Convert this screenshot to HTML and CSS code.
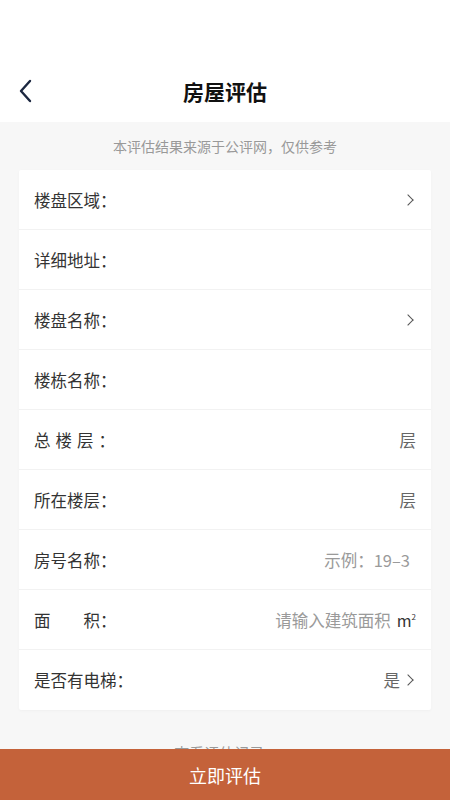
FILE: index.html
```html
<!DOCTYPE html>
<html lang="zh-CN">
<head>
  <meta charset="UTF-8" />
  <meta name="viewport" content="width=device-width, initial-scale=1.0"/>
  <title>房屋评估</title>
  <link rel="stylesheet" href="styles.css">
</head>
<body>

<header class="top">
  <div class="status"></div>
  <nav class="navbar">
    <a class="back" href="#">
      <svg width="14" height="24" viewBox="0 0 14 24"><path d="M12 2 L3 12 L12 22" fill="none" stroke="#1c2740" stroke-width="2.4" stroke-linecap="round" stroke-linejoin="round"/></svg>
    </a>
    <h1>房屋评估</h1>
  </nav>
</header>

<main class="page">
  <p class="tip">本评估结果来源于公评网，仅供参考</p>

  <section class="card">
    <div class="row">
      <span class="label">楼盘区域：</span>
      <span class="value"><i class="arrow"></i></span>
    </div>
    <div class="row">
      <span class="label">详细地址：</span>
    </div>
    <div class="row">
      <span class="label">楼盘名称：</span>
      <span class="value"><i class="arrow"></i></span>
    </div>
    <div class="row">
      <span class="label">楼栋名称：</span>
    </div>
    <div class="row">
      <span class="label"><span class="wide">总楼层</span>：</span>
      <span class="value">层</span>
    </div>
    <div class="row">
      <span class="label">所在楼层：</span>
      <span class="value">层</span>
    </div>
    <div class="row">
      <span class="label">房号名称：</span>
      <span class="value hint">示例：19–3</span>
    </div>
    <div class="row">
      <span class="label">面&emsp;&emsp;积：</span>
      <span class="value"><span class="hint">请输入建筑面积</span> <span class="unit">m<sup>2</sup></span></span>
    </div>
    <div class="row last">
      <span class="label">是否有电梯：</span>
      <span class="value">是<i class="arrow"></i></span>
    </div>
  </section>

  <a class="records" href="#">查看评估记录 &gt;</a>
</main>

<button class="submit" type="button">立即评估</button>

</body>
</html>
```

FILE: styles.css
```css
body {
  margin: 0;
  padding: 0;
  width: 450px;
  height: 800px;
  overflow: hidden;
  background: #f7f7f7;
  font-family: "Noto Sans CJK SC", "Noto Sans", sans-serif;
  color: #333;
}

.top { background: #fff; }
.status { height: 60px; }
.navbar {
  height: 62px;
  display: flex;
  align-items: center;
  justify-content: center;
  position: relative;
}
.navbar h1 {
  margin: 0;
  font-size: 21px;
  font-weight: 700;
  color: #111;
}
.back {
  position: absolute;
  left: 18px;
  top: 19px;
  display: flex;
}

.page { padding: 0 19px; }
.tip {
  margin: 0;
  height: 48px;
  line-height: 48px;
  text-align: center;
  font-size: 14px;
  color: #999;
}

.card {
  background: #fff;
  border-radius: 2px;
  box-shadow: 0 1px 3px rgba(0, 0, 0, 0.03);
}
.row {
  height: 59px;
  border-bottom: 1px solid #f2f2f2;
  display: flex;
  align-items: center;
  justify-content: space-between;
  padding: 0 15px;
}
.row.last { border-bottom: none; height: 60px; }
.label { font-size: 16.5px; color: #333; }
.wide { letter-spacing: 5px; }
.value {
  display: flex;
  align-items: center;
  font-size: 16.5px;
  color: #666;
}
.hint { color: #9a9a9a; padding-right: 6px; }
.unit { color: #333; font-size: 16px; }
.unit sup { font-size: 8px; vertical-align: 7px; }
.arrow {
  display: inline-block;
  width: 7px;
  height: 7px;
  border-top: 1.7px solid #555;
  border-right: 1.7px solid #555;
  transform: rotate(45deg);
  margin: 0 4px 0 4px;
}

.records {
  display: block;
  margin-top: 32px;
  text-align: center;
  font-size: 15px;
  color: #999;
  text-decoration: none;
}

.submit {
  position: fixed;
  left: 0;
  bottom: 0;
  width: 100%;
  height: 51px;
  border: none;
  background: #c4623a;
  color: #fff;
  font-family: "Noto Sans CJK SC", sans-serif;
  font-size: 18px;
}
```
